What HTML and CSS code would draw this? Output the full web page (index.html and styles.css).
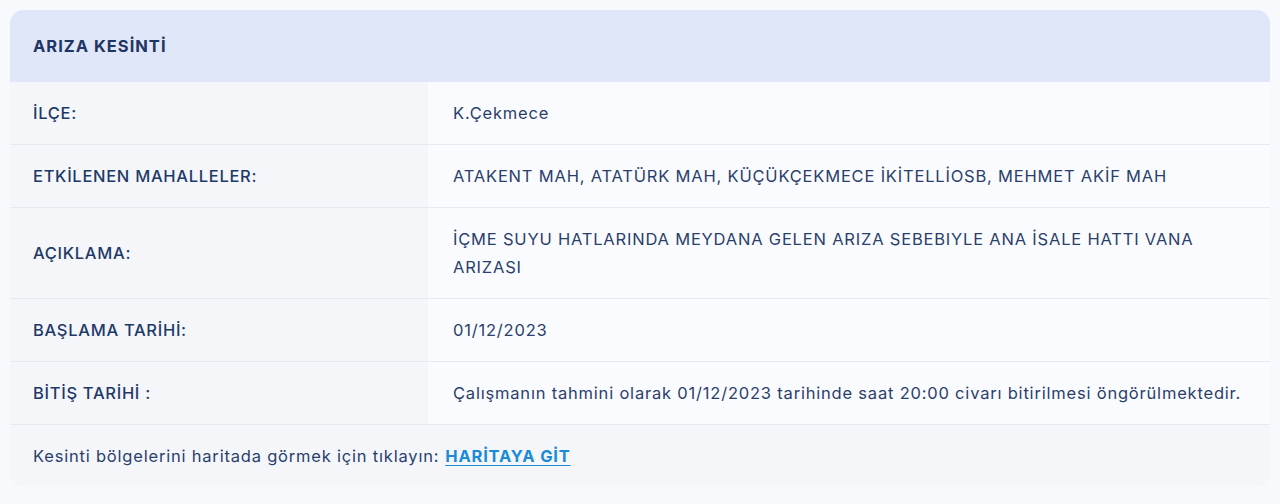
FILE: index.html
```html
<!DOCTYPE html>
<html lang="tr">
<head>
<meta charset="utf-8">
<link rel="stylesheet" href="styles.css">
</head>
<body>
<div class="card">
  <div class="card-head">ARIZA KESİNTİ</div>
  <div class="row"><div class="label">İLÇE:</div><div class="value">K.Çekmece</div></div>
  <div class="row"><div class="label">ETKİLENEN MAHALLELER:</div><div class="value">ATAKENT MAH, ATATÜRK MAH, KÜÇÜKÇEKMECE İKİTELLİOSB, MEHMET AKİF MAH</div></div>
  <div class="row"><div class="label">AÇIKLAMA:</div><div class="value">İÇME SUYU HATLARINDA MEYDANA GELEN ARIZA SEBEBIYLE ANA İSALE HATTI VANA ARIZASI</div></div>
  <div class="row"><div class="label">BAŞLAMA TARİHİ:</div><div class="value">01/12/2023</div></div>
  <div class="row"><div class="label">BİTİŞ TARİHİ :</div><div class="value">Çalışmanın tahmini olarak 01/12/2023 tarihinde saat 20:00 civarı bitirilmesi öngörülmektedir.</div></div>
  <div class="foot">Kesinti bölgelerini haritada görmek için tıklayın: <a class="map-link" href="#">HARİTAYA GİT</a></div>
</div>
</body>
</html>
```

FILE: styles.css
```css
html, body { margin: 0; padding: 0; }
body {
  background: #f8f9fc;
  font-family: "Inter", "Noto Sans", sans-serif;
  color: #213968;
  padding: 10px 10px 18px 10px;
}
.card {
  border-radius: 14px;
  overflow: hidden;
  background: #f4f6fa;
}
.card-head {
  background: #dfe7f8;
  height: 72px;
  display: flex;
  align-items: center;
  padding-left: 23px;
  font-weight: 700;
  font-size: 16.5px;
  letter-spacing: 1px;
  color: #1f3563;
}
.row {
  display: grid;
  grid-template-columns: 418px 1fr;
  border-bottom: 1px solid #e6e9ef;
}
.label {
  background: #f4f6fa;
  display: flex;
  align-items: center;
  padding-left: 23px;
  font-size: 16.5px;
  letter-spacing: 0.7px;
  font-weight: 500;
}
.value {
  background: #fafbfe;
  display: flex;
  align-items: center;
  padding: 17px 18px 17px 25px;
  font-size: 16.5px;
  letter-spacing: 0.8px;
  line-height: 28px;
  color: #2a3f6c;
}
.foot {
  height: 62px;
  display: flex;
  align-items: center;
  padding-left: 23px;
  font-size: 16.5px;
  letter-spacing: 0.8px;
  color: #2a3f6c;
}
.foot .map-link {
  margin-left: 6px;
  color: #1b8bd6;
  font-weight: 700;
  text-decoration: underline;
  text-underline-offset: 3px;
}
```
